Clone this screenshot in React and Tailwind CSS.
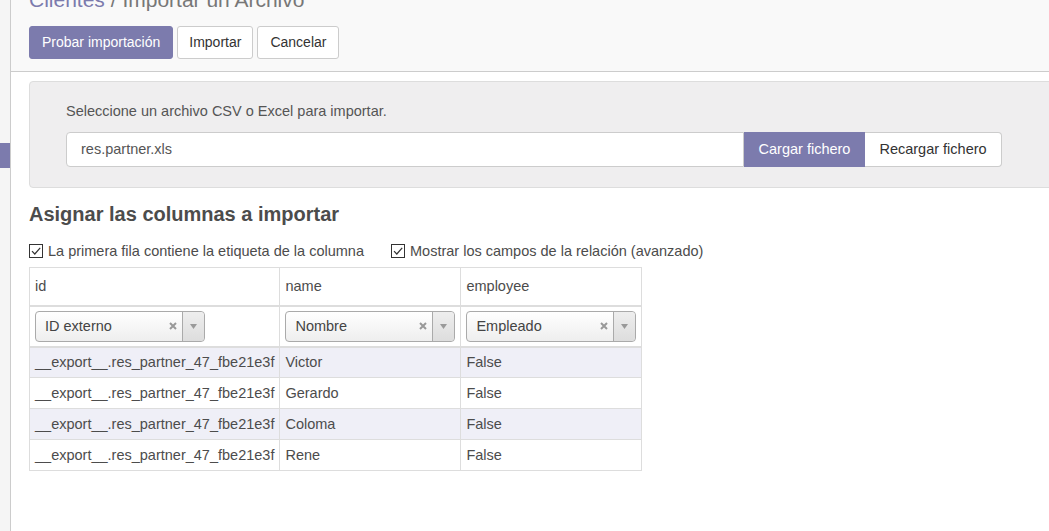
import React from 'react';

const filas = [
  { id: '__export__.res_partner_47_fbe21e3f', name: 'Victor', employee: 'False' },
  { id: '__export__.res_partner_47_fbe21e3f', name: 'Gerardo', employee: 'False' },
  { id: '__export__.res_partner_47_fbe21e3f', name: 'Coloma', employee: 'False' },
  { id: '__export__.res_partner_47_fbe21e3f', name: 'Rene', employee: 'False' },
];

const columnas = [
  { key: 'id', campo: 'ID externo', w: 'w-[248px]' },
  { key: 'name', campo: 'Nombre', w: 'w-[181px]' },
  { key: 'employee', campo: 'Empleado', w: 'w-[181px]' },
];

const Check = () => (
  <span className="inline-flex items-center justify-center w-[14px] h-[14px] border border-[#333] bg-white mr-[5px]">
    <svg width="12" height="12" viewBox="0 0 12 12" fill="none">
      <path d="M2 6.2 L4.8 9 L10.2 2.8" stroke="#333" strokeWidth="1.2" />
    </svg>
  </span>
);

const Selector = ({ valor }) => (
  <div className="flex items-center h-[31px] w-[170px] border border-[#aaa] rounded-[4px] bg-gradient-to-b from-white to-[#eee] text-[#444]">
    <span className="flex-1 pl-[9px] text-[14.5px]">{valor}</span>
    <span className="w-[18px] flex items-center justify-center">
      <svg width="8" height="8" viewBox="0 0 8 8">
        <path d="M1 1 L7 7 M7 1 L1 7" stroke="#999" strokeWidth="2" />
      </svg>
    </span>
    <span className="w-[22px] h-full border-l border-[#aaa] flex items-center justify-center bg-gradient-to-b from-[#eee] to-[#ddd] rounded-r-[4px]">
      <svg width="7" height="5" viewBox="0 0 7 5">
        <path d="M0 0 L7 0 L3.5 5 Z" fill="#999" />
      </svg>
    </span>
  </div>
);

export default function App() {
  return (
    <div className="flex h-[531px] w-[1049px] overflow-hidden bg-white text-[#4c4c4c]" style={{ fontFamily: '"Liberation Sans", Arial, sans-serif' }}>
      {/* barra lateral */}
      <aside className="w-[11px] shrink-0 bg-[#f5f5f5] border-r border-[#ccc] pt-[143px]">
        <div className="h-[25px] w-[10px] bg-[#7c7bad]" />
      </aside>

      <main className="flex-1 overflow-hidden">
        {/* panel de control */}
        <div className="h-[72px] flex flex-col bg-[#f9f9f9] border-b border-[#ccc] px-[18px]">
          <div className="mt-[-12px] h-[24px] text-[21px] leading-[24px] whitespace-nowrap">
            <span className="text-[#7c7bad]">Clientes</span>
            <span className="text-[#777]"> / Importar un Archivo</span>
          </div>
          <div className="mt-[14px] flex gap-[4px] text-[14px]">
            <button className="h-[33px] px-[12px] rounded-[3px] bg-[#7c7bad] text-white border border-[#7c7bad]">Probar importación</button>
            <button className="h-[33px] px-[11px] rounded-[3px] bg-white text-[#333] border border-[#ccc]">Importar</button>
            <button className="h-[33px] px-[12px] rounded-[3px] bg-white text-[#333] border border-[#ccc]">Cancelar</button>
          </div>
        </div>

        <div className="px-[18px] pt-[9px]">
          {/* selección de archivo */}
          <div className="w-[1040px] h-[107px] bg-[#efeeef] border border-[#ddd] rounded-[4px] pl-[36px] pt-[19px]">
            <p className="text-[14.5px] leading-[20px] text-[#555]">Seleccione un archivo CSV o Excel para importar.</p>
            <div className="mt-[11px] flex h-[35px] text-[14.5px]">
              <div className="w-[678px] bg-white border border-[#ccc] rounded-l-[4px] pl-[14px] flex items-center text-[#555]">res.partner.xls</div>
              <button className="w-[121px] bg-[#7c7bad] text-white border border-[#7c7bad]">Cargar fichero</button>
              <button className="w-[137px] bg-white text-[#333] border border-[#ccc] border-l-0 rounded-r-[4px]">Recargar fichero</button>
            </div>
          </div>

          <h2 className="mt-[14px] text-[20px] font-bold leading-[24px] text-[#4c4c4c]">Asignar las columnas a importar</h2>

          <div className="mt-[15px] flex items-center text-[14.5px] leading-[20px]">
            <label className="flex items-center"><Check />La primera fila contiene la etiqueta de la columna</label>
            <label className="flex items-center ml-[27px]"><Check />Mostrar los campos de la relación (avanzado)</label>
          </div>

          {/* tabla */}
          <table className="mt-[6px] border-collapse text-[14.5px] leading-[20px]">
            <thead>
              <tr className="h-[38px]">
                {columnas.map((c) => (
                  <th key={c.key} className={`${c.w} border border-[#ddd] border-b-2 text-left font-normal px-[5px]`}>{c.key}</th>
                ))}
              </tr>
              <tr className="h-[41px]">
                {columnas.map((c) => (
                  <th key={c.key} className="border border-[#ddd] border-b-2 text-left font-normal px-[5px]">
                    <Selector valor={c.campo} />
                  </th>
                ))}
              </tr>
            </thead>
            <tbody>
              {filas.map((f, i) => (
                <tr key={i} className={`h-[31px] ${i % 2 === 0 ? 'bg-[#efeff7]' : 'bg-white'}`}>
                  <td className="border border-[#ddd] px-[5px] whitespace-nowrap">{f.id}</td>
                  <td className="border border-[#ddd] px-[5px]">{f.name}</td>
                  <td className="border border-[#ddd] px-[5px]">{f.employee}</td>
                </tr>
              ))}
            </tbody>
          </table>
        </div>
      </main>
    </div>
  );
}
